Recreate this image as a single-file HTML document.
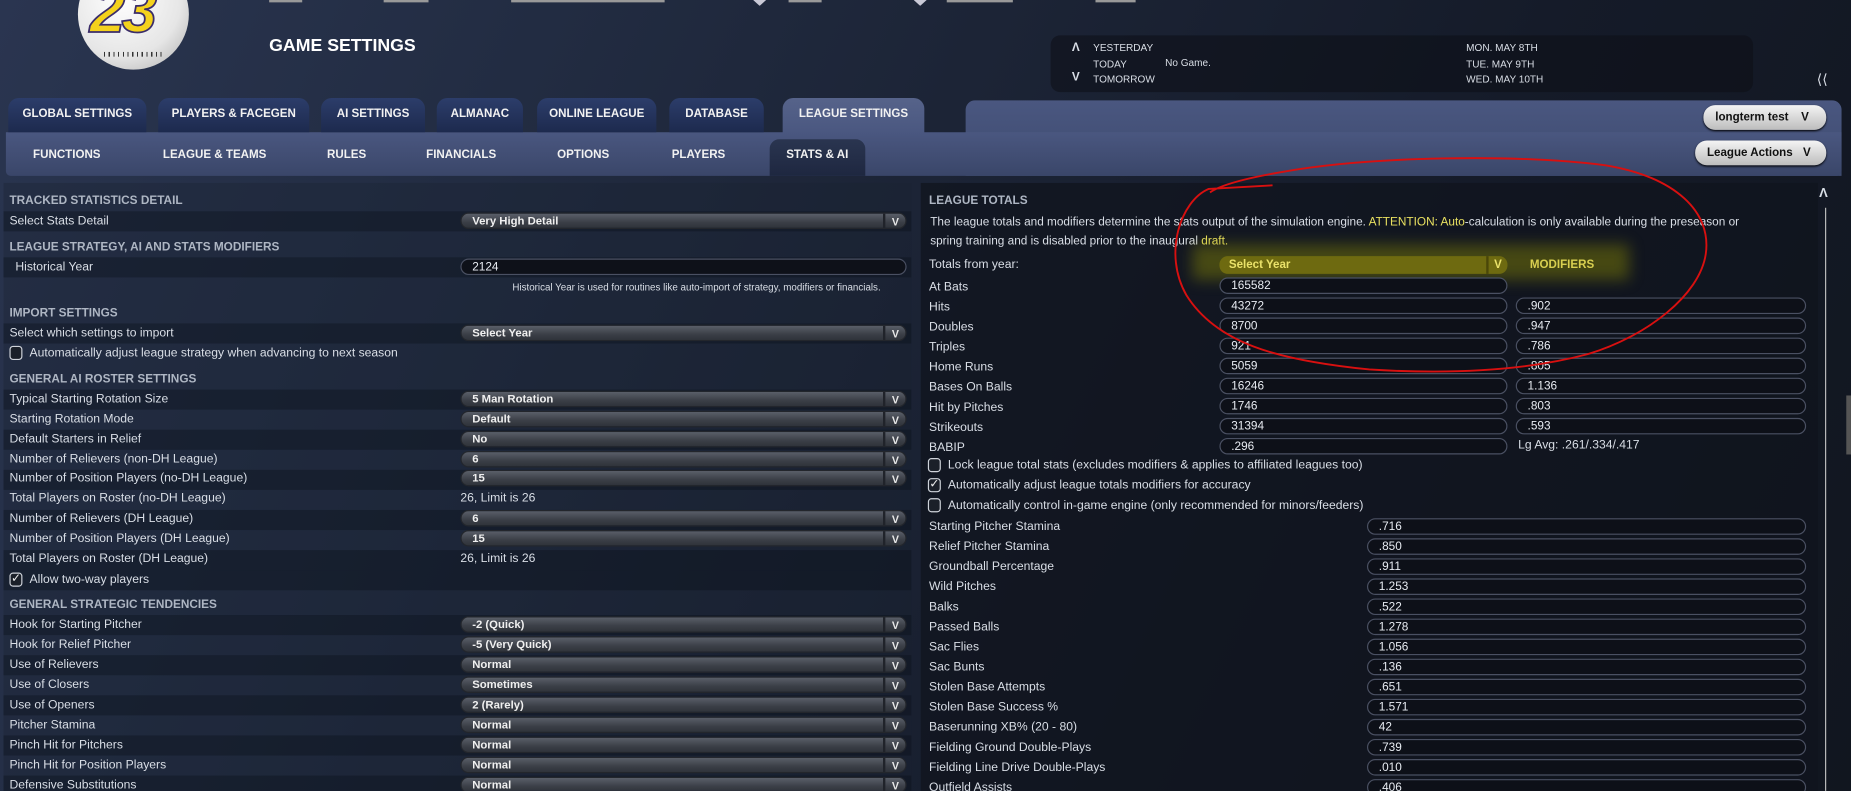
<!DOCTYPE html>
<html><head><meta charset="utf-8"><style>
*{margin:0;padding:0;box-sizing:border-box}
html,body{width:1851px;height:790px;overflow:hidden;background:#151b28}
#s{position:absolute;left:0;top:0;width:1568px;height:670px;transform:scale(1.18048);transform-origin:0 0;
font-family:"Liberation Sans Narrow","Liberation Sans",sans-serif;font-size:10.3px;color:#d9dee6;
background:linear-gradient(115deg,#2a3550 0%,#222c42 25%,#1c2436 45%,#151b29 70%,#11161f 100%);overflow:hidden}
.a{position:absolute;white-space:nowrap}
.h{position:absolute;left:8px;font-weight:bold;font-size:10px;color:#aeb6c3;margin-top:2px}
.l{position:absolute;left:8px;margin-top:2px}
.band{position:absolute;left:3px;width:769px;height:17px;background:rgba(10,14,22,.35)}
.dd{position:absolute;left:390px;width:378px;height:14px;border-radius:7px;background:linear-gradient(#5a5f69,#3b3f47 60%,#2f333a);padding-left:9px;font-weight:bold;font-size:9.6px;line-height:14px;color:#f0f0f0;border:1px solid #23262c}
.dd:after{content:"V";position:absolute;right:0;top:0;width:17px;height:12px;border-left:2px solid #20232a;text-align:center;font-size:9px;color:#e8e8e8}
.in{position:absolute;height:14px;border-radius:7px;background:#0d1018;border:1px solid #4a5062;padding-left:9px;line-height:13px;font-size:10px;color:#e8ecf2}
.cb{position:absolute;width:11px;height:12px;border:1.5px solid #cfd3da;border-radius:3px;background:#1b2029;font-size:10px;line-height:9px;text-align:center;color:#eee}
.tab{position:absolute;top:83px;height:29px;border-radius:9px 9px 0 0;background:linear-gradient(#2c3d6a,#1d2a4e);color:#f2f2f2;font-weight:bold;font-size:9.8px;text-align:center;line-height:27px}
.st{position:absolute;top:126px;font-weight:bold;font-size:9.8px;color:#f2f2f2}
.btn{position:absolute;height:21px;border-radius:10px;background:linear-gradient(#f4f4f4,#bdbdbd);color:#111;font-weight:bold;font-size:9.8px;line-height:21px;padding-left:10px;box-shadow:0 1px 2px #000}
</style></head><body><div id="s">
<div class="a" style="left:228px;top:0;width:28px;height:2px;background:#999"></div>
<div class="a" style="left:325px;top:0;width:38px;height:2px;background:#999"></div>
<div class="a" style="left:433px;top:0;width:130px;height:2px;background:#999"></div>
<div class="a" style="left:638px;top:0;width:11px;height:5px;background:#c9c9d6;clip-path:polygon(0 0,100% 0,50% 100%)"></div>
<div class="a" style="left:668px;top:0;width:28px;height:2px;background:#999"></div>
<div class="a" style="left:774px;top:0;width:11px;height:5px;background:#c9c9d6;clip-path:polygon(0 0,100% 0,50% 100%)"></div>
<div class="a" style="left:802px;top:0;width:56px;height:2px;background:#999"></div>
<div class="a" style="left:928px;top:0;width:34px;height:2px;background:#999"></div>
<div class="a" style="left:66px;top:-35px;width:94px;height:94px;border-radius:50%;background:radial-gradient(circle at 40% 35%,#fff,#e6e6e6 60%,#a9a9a9)"></div>
<div class="a" style="left:76px;top:-22px;font-size:54px;font-weight:bold;font-style:italic;color:#f4d21c;-webkit-text-stroke:1.5px #3b2d6a;font-family:'Liberation Sans',sans-serif;letter-spacing:-3px">23</div>
<div class="a" style="left:88px;top:44px;width:50px;height:4px;background:repeating-linear-gradient(90deg,#333 0 1px,transparent 1px 4px)"></div>
<div class="a" style="left:228px;top:30px;font-size:15px;font-weight:bold;color:#fff">GAME SETTINGS</div>
<div class="a" style="left:890px;top:30px;width:595px;height:48px;border-radius:8px;background:rgba(12,15,22,.55)"></div>
<div class="a" style="left:908px;top:35px;font-size:10px;font-weight:bold">&#923;</div>
<div class="a" style="left:908px;top:60px;font-size:10px;font-weight:bold">V</div>
<div class="a" style="left:926px;top:34px;font-size:8.5px;line-height:13.5px">YESTERDAY<br>TODAY<br>TOMORROW</div>
<div class="a" style="left:987px;top:48px;font-size:8.5px">No Game.</div>
<div class="a" style="left:1242px;top:34px;font-size:8.5px;line-height:13.5px">MON. MAY 8TH<br>TUE. MAY 9TH<br>WED. MAY 10TH</div>
<div class="a" style="left:1539px;top:60px;font-size:12px">&#10216;&#10216;</div>
<div class="a" style="left:818px;top:85px;width:742px;height:64px;border-radius:8px 8px 0 0;background:linear-gradient(#4a5780,#3d4a6f)"></div>
<div class="a" style="left:5px;top:112px;width:1555px;height:37px;background:linear-gradient(#4a5780,#3a4669);border-radius:0 0 4px 4px"></div>
<div class="tab" style="left:7px;width:117px">GLOBAL SETTINGS</div>
<div class="tab" style="left:134px;width:128px">PLAYERS &amp; FACEGEN</div>
<div class="tab" style="left:272px;width:88px">AI SETTINGS</div>
<div class="tab" style="left:370px;width:73px">ALMANAC</div>
<div class="tab" style="left:455px;width:101px">ONLINE LEAGUE</div>
<div class="tab" style="left:567px;width:80px">DATABASE</div>
<div class="tab" style="left:663px;width:120px;height:30px;background:linear-gradient(#56638a,#4a5780)">LEAGUE SETTINGS</div>
<div class="a" style="left:652px;top:118px;width:81px;height:31px;border-radius:8px 8px 0 0;background:linear-gradient(#2a3550,#1e2740)"></div>
<div class="st" style="left:28px">FUNCTIONS</div>
<div class="st" style="left:138px">LEAGUE &amp; TEAMS</div>
<div class="st" style="left:277px">RULES</div>
<div class="st" style="left:361px">FINANCIALS</div>
<div class="st" style="left:472px">OPTIONS</div>
<div class="st" style="left:569px">PLAYERS</div>
<div class="st" style="left:666px">STATS &amp; AI</div>
<div class="btn" style="left:1443px;top:89px;width:104px">longterm test <b style="margin-left:8px">V</b></div>
<div class="btn" style="left:1436px;top:119px;width:111px">League Actions <b style="margin-left:6px">V</b></div>
<div class="a" style="left:3px;top:155px;width:769px;height:520px;background:rgba(25,33,50,.35)"></div>
<div class="a" style="left:780px;top:155px;width:760px;height:520px;background:rgba(16,20,30,.75)"></div>
<div class="a" style="left:1546px;top:176px;width:1px;height:500px;background:#bbb"></div>
<div class="a" style="left:1541px;top:158px;font-size:11px;font-weight:bold">&#923;</div>
<div class="a" style="left:1564px;top:335px;width:4px;height:50px;background:#555"></div>

<div class="band" style="top:179px"></div><div class="band" style="top:218px"></div>
<div class="band" style="top:274px"></div><div class="band" style="top:330px"></div>
<div class="band" style="top:364px"></div><div class="band" style="top:398px"></div>
<div class="band" style="top:432px"></div><div class="band" style="top:466px"></div>
<div class="band" style="top:483px"></div><div class="band" style="top:521px"></div>
<div class="band" style="top:555px"></div><div class="band" style="top:589px"></div>
<div class="band" style="top:623px"></div><div class="band" style="top:657px"></div>

<div class="h" style="top:163px">TRACKED STATISTICS DETAIL</div>
<div class="l" style="top:180px">Select Stats Detail</div><div class="dd" style="top:180px">Very High Detail</div>
<div class="h" style="top:202px">LEAGUE STRATEGY, AI AND STATS MODIFIERS</div>
<div class="l" style="top:219px;left:13px">Historical Year</div><div class="in" style="left:390px;top:219px;width:378px;background:#0e1119">2124</div>
<div class="a" style="left:434px;top:238px;font-size:8.3px">Historical Year is used for routines like auto-import of strategy, modifiers or financials.</div>
<div class="h" style="top:258px">IMPORT SETTINGS</div>
<div class="l" style="top:275px">Select which settings to import</div><div class="dd" style="top:275px">Select Year</div>
<div class="cb" style="left:8px;top:293px"></div><div class="a" style="left:25px;top:294px">Automatically adjust league strategy when advancing to next season</div>
<div class="h" style="top:314px">GENERAL AI ROSTER SETTINGS</div>
<div class="l" style="top:331px">Typical Starting Rotation Size</div><div class="dd" style="top:331px">5 Man Rotation</div>
<div class="l" style="top:348px">Starting Rotation Mode</div><div class="dd" style="top:348px">Default</div>
<div class="l" style="top:365px">Default Starters in Relief</div><div class="dd" style="top:365px">No</div>
<div class="l" style="top:382px">Number of Relievers (non-DH League)</div><div class="dd" style="top:382px">6</div>
<div class="l" style="top:398px">Number of Position Players (no-DH League)</div><div class="dd" style="top:398px">15</div>
<div class="l" style="top:415px">Total Players on Roster (no-DH League)</div><div class="a" style="left:390px;top:417px">26, Limit is 26</div>
<div class="l" style="top:432px">Number of Relievers (DH League)</div><div class="dd" style="top:432px">6</div>
<div class="l" style="top:449px">Number of Position Players (DH League)</div><div class="dd" style="top:449px">15</div>
<div class="l" style="top:466px">Total Players on Roster (DH League)</div><div class="a" style="left:390px;top:468px">26, Limit is 26</div>
<div class="cb" style="left:8px;top:485px">&#10003;</div><div class="a" style="left:25px;top:486px">Allow two-way players</div>
<div class="h" style="top:505px">GENERAL STRATEGIC TENDENCIES</div>
<div class="l" style="top:522px">Hook for Starting Pitcher</div><div class="dd" style="top:522px">-2 (Quick)</div>
<div class="l" style="top:539px">Hook for Relief Pitcher</div><div class="dd" style="top:539px">-5 (Very Quick)</div>
<div class="l" style="top:556px">Use of Relievers</div><div class="dd" style="top:556px">Normal</div>
<div class="l" style="top:573px">Use of Closers</div><div class="dd" style="top:573px">Sometimes</div>
<div class="l" style="top:590px">Use of Openers</div><div class="dd" style="top:590px">2 (Rarely)</div>
<div class="l" style="top:607px">Pitcher Stamina</div><div class="dd" style="top:607px">Normal</div>
<div class="l" style="top:624px">Pinch Hit for Pitchers</div><div class="dd" style="top:624px">Normal</div>
<div class="l" style="top:641px">Pinch Hit for Position Players</div><div class="dd" style="top:641px">Normal</div>
<div class="l" style="top:658px">Defensive Substitutions</div><div class="dd" style="top:658px">Normal</div>

<div class="h" style="left:787px;top:163px">LEAGUE TOTALS</div>
<div class="a" style="left:788px;top:181px;font-size:10px;line-height:16px;white-space:normal;width:712px">The league totals and modifiers determine the stats output of the simulation engine. <span style="color:#e8e060">ATTENTION: Auto</span>-calculation is only available during the preseason or spring training and is disabled prior to the inaugural <span style="color:#e8e060">draft.</span></div>
<div class="a" style="left:1010px;top:207px;width:370px;height:30px;background:rgba(150,150,0,.4);filter:blur(6px)"></div>
<div class="a" style="left:787px;top:219px">Totals from year:</div>
<div class="a" style="left:1033px;top:217px;width:244px;height:15px;border-radius:7px;background:#6e6a10;color:#eae26a;font-weight:bold;font-size:9.8px;padding-left:8px;line-height:15px">Select Year<span style="position:absolute;right:0;top:0;width:18px;text-align:center;border-left:2px solid #4a4708">V</span></div>
<div class="a" style="left:1296px;top:219px;color:#d8cf50;font-weight:bold;font-size:9.8px">MODIFIERS</div>
<div class="a" style="left:787px;top:235px;line-height:17px">At Bats<br>Hits<br>Doubles<br>Triples<br>Home Runs<br>Bases On Balls<br>Hit by Pitches<br>Strikeouts<br>BABIP</div>
<div class="in" style="left:1033px;top:235px;width:244px">165582</div>
<div class="in" style="left:1033px;top:252px;width:244px">43272</div><div class="in" style="left:1284px;top:252px;width:246px">.902</div>
<div class="in" style="left:1033px;top:269px;width:244px">8700</div><div class="in" style="left:1284px;top:269px;width:246px">.947</div>
<div class="in" style="left:1033px;top:286px;width:244px">921</div><div class="in" style="left:1284px;top:286px;width:246px">.786</div>
<div class="in" style="left:1033px;top:303px;width:244px">5059</div><div class="in" style="left:1284px;top:303px;width:246px">.805</div>
<div class="in" style="left:1033px;top:320px;width:244px">16246</div><div class="in" style="left:1284px;top:320px;width:246px">1.136</div>
<div class="in" style="left:1033px;top:337px;width:244px">1746</div><div class="in" style="left:1284px;top:337px;width:246px">.803</div>
<div class="in" style="left:1033px;top:354px;width:244px">31394</div><div class="in" style="left:1284px;top:354px;width:246px">.593</div>
<div class="in" style="left:1033px;top:371px;width:244px">.296</div><div class="a" style="left:1286px;top:372px">Lg Avg: .261/.334/.417</div>
<div class="cb" style="left:786px;top:388px"></div><div class="a" style="left:803px;top:389px">Lock league total stats (excludes modifiers &amp; applies to affiliated leagues too)</div>
<div class="cb" style="left:786px;top:405px">&#10003;</div><div class="a" style="left:803px;top:406px">Automatically adjust league totals modifiers for accuracy</div>
<div class="cb" style="left:786px;top:422px"></div><div class="a" style="left:803px;top:423px">Automatically control in-game engine (only recommended for minors/feeders)</div>
<div class="a" style="left:787px;top:438px;line-height:17px">Starting Pitcher Stamina<br>Relief Pitcher Stamina<br>Groundball Percentage<br>Wild Pitches<br>Balks<br>Passed Balls<br>Sac Flies<br>Sac Bunts<br>Stolen Base Attempts<br>Stolen Base Success %<br>Baserunning XB% (20 - 80)<br>Fielding Ground Double-Plays<br>Fielding Line Drive Double-Plays<br>Outfield Assists</div>
<div class="in" style="left:1158px;top:439px;width:372px">.716</div>
<div class="in" style="left:1158px;top:456px;width:372px">.850</div>
<div class="in" style="left:1158px;top:473px;width:372px">.911</div>
<div class="in" style="left:1158px;top:490px;width:372px">1.253</div>
<div class="in" style="left:1158px;top:507px;width:372px">.522</div>
<div class="in" style="left:1158px;top:524px;width:372px">1.278</div>
<div class="in" style="left:1158px;top:541px;width:372px">1.056</div>
<div class="in" style="left:1158px;top:558px;width:372px">.136</div>
<div class="in" style="left:1158px;top:575px;width:372px">.651</div>
<div class="in" style="left:1158px;top:592px;width:372px">1.571</div>
<div class="in" style="left:1158px;top:609px;width:372px">42</div>
<div class="in" style="left:1158px;top:626px;width:372px">.739</div>
<div class="in" style="left:1158px;top:643px;width:372px">.010</div>
<div class="in" style="left:1158px;top:660px;width:372px">.406</div>
<svg class="a" style="left:0;top:0" width="1568" height="670"><path d="M1078 157 L1024 160 C1000 170 985 215 1005 250 C1030 290 1080 305 1160 313 C1240 318 1300 312 1345 300 C1395 285 1440 250 1445 215 C1450 180 1420 150 1360 140 C1280 130 1160 133 1090 145 C1060 150 1035 156 1025 163" fill="none" stroke="#d81010" stroke-width="1.6"/></svg>
</div></body></html>
